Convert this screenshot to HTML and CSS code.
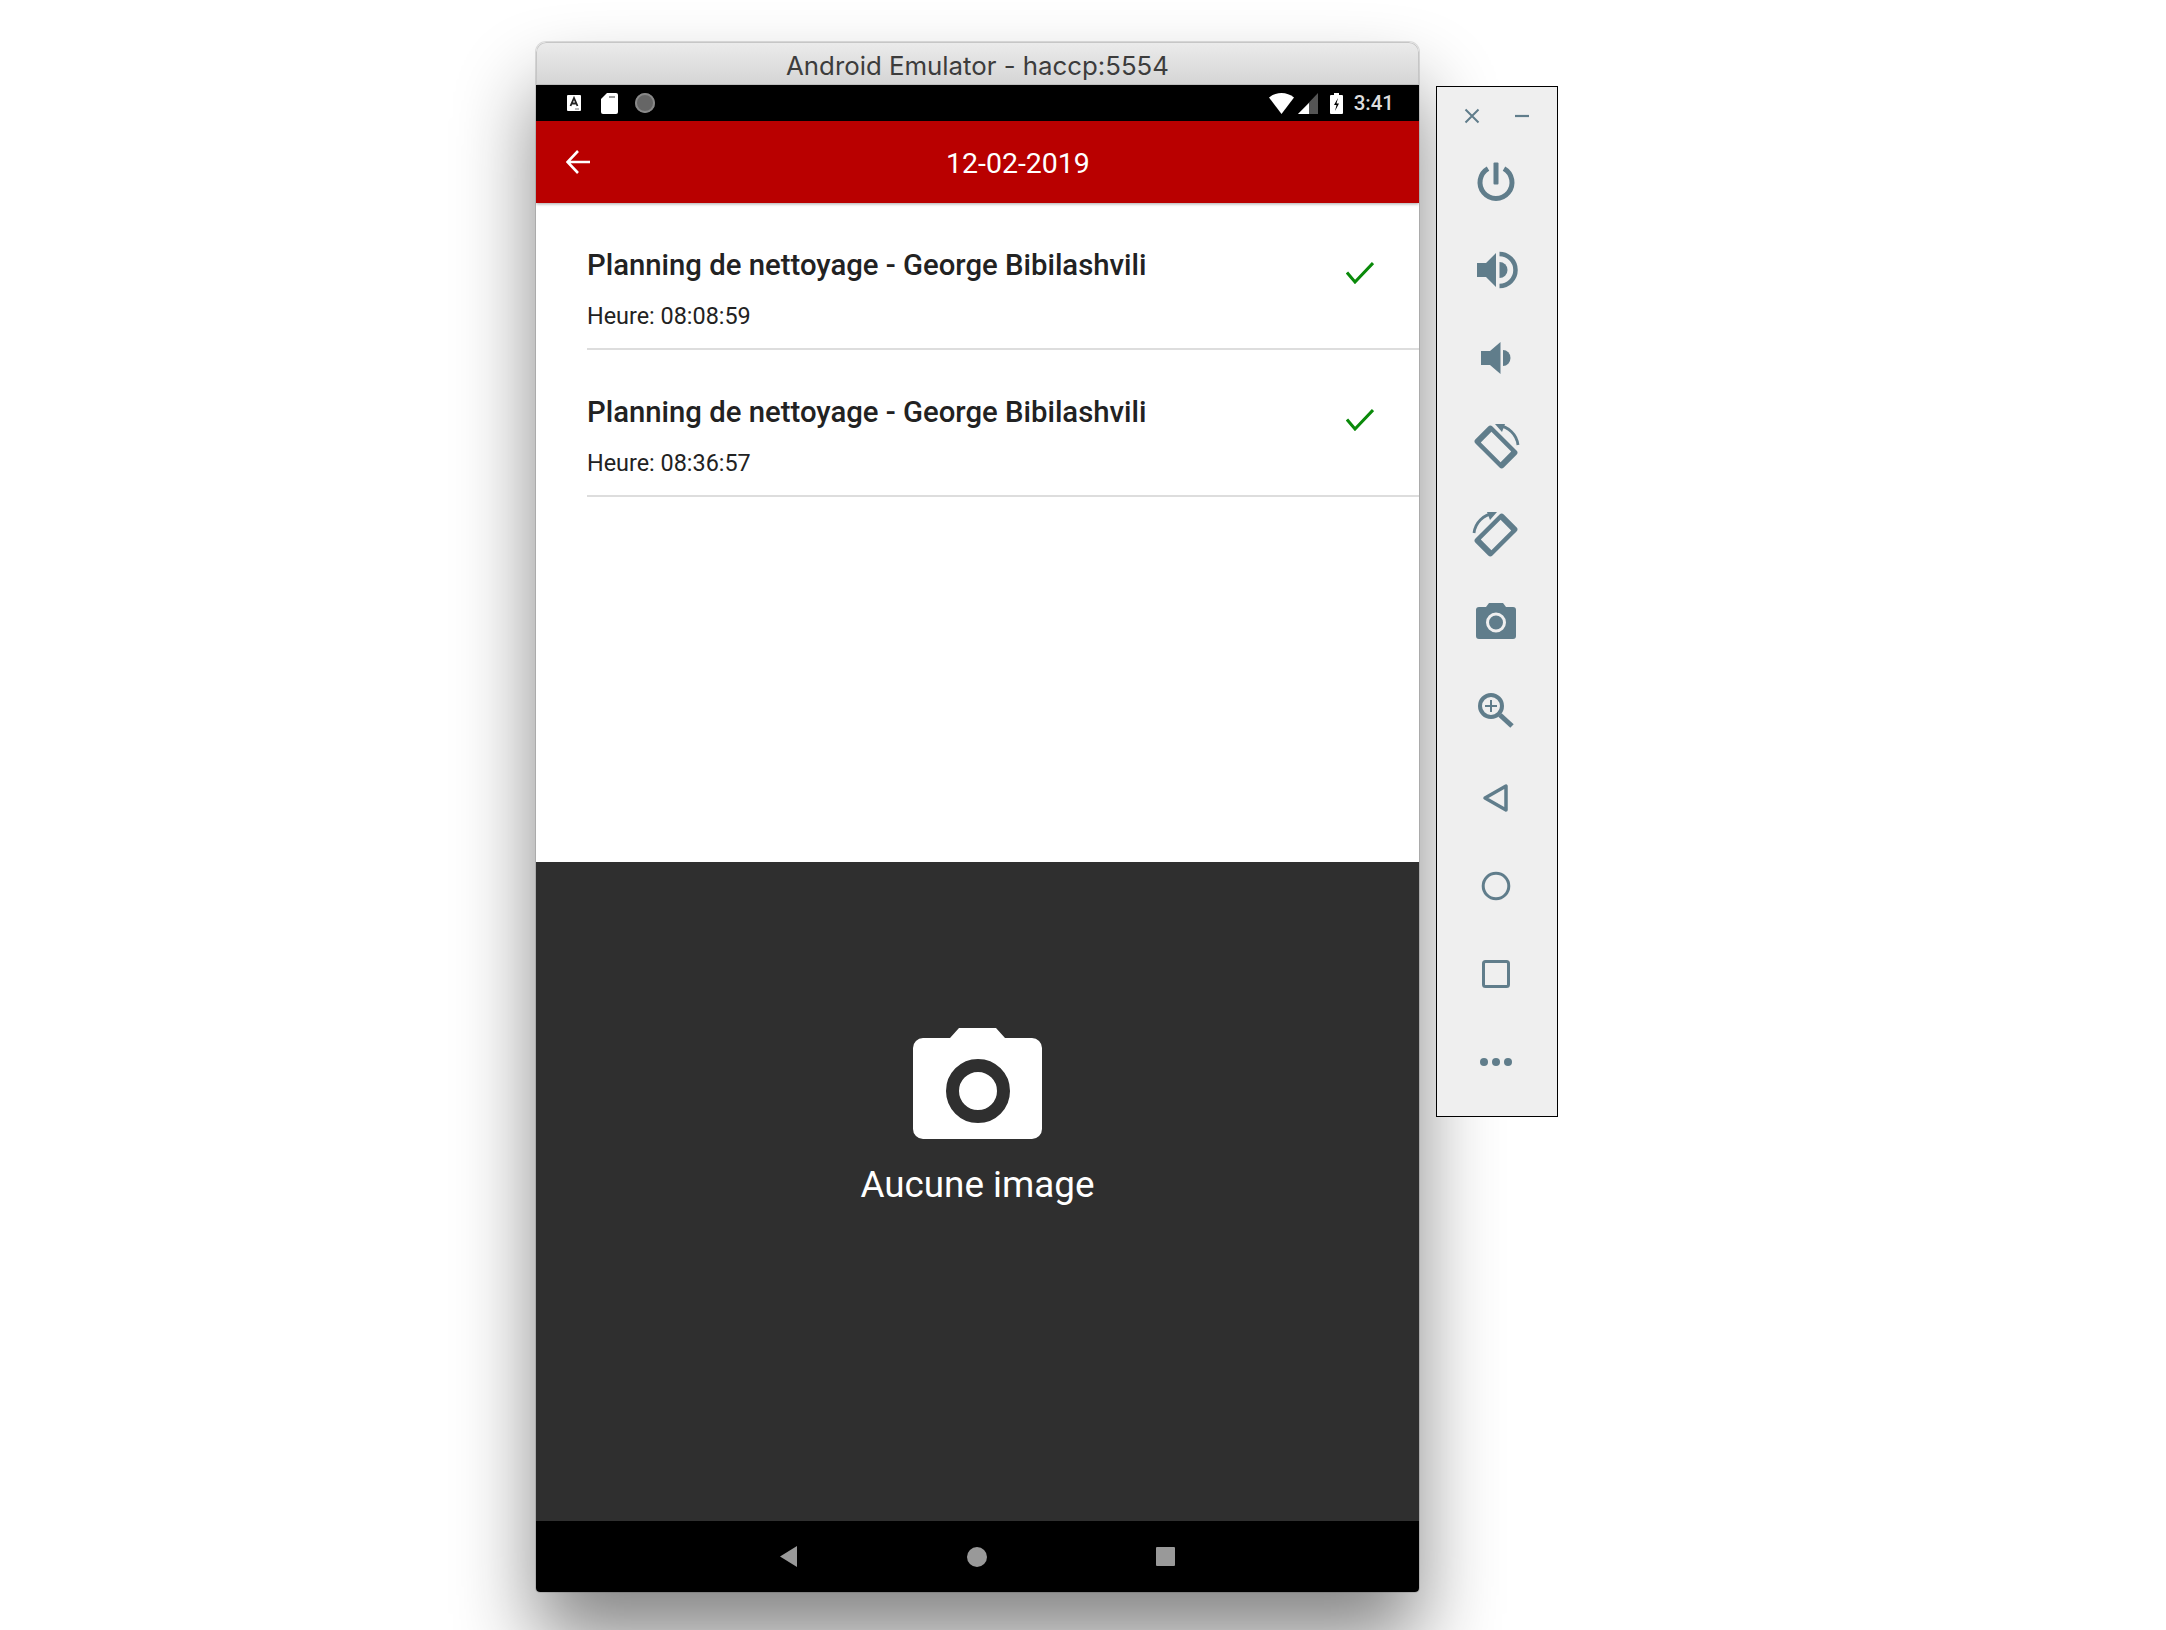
FILE: index.html
```html
<!DOCTYPE html>
<html lang="en">
<head>
    <meta charset="UTF-8">
    <title>Android Emulator - haccp:5554</title>
    <link rel="stylesheet" href="styles.css">
</head>
<body>
    <div class="desktop">
        <div class="emulator">
            <div class="titlebar">Android Emulator - haccp:5554</div>

            <div class="statusbar">
                <div class="status-left">
                    <svg class="notif-a" width="14" height="16" viewBox="0 0 14 16">
                        <rect width="14" height="16" rx="1" fill="#fff"/>
                        <path d="M3.5 11 7 3l3.500 8M5 8.500h4" fill="none" stroke="#222" stroke-width="1.800"/>
                        <path d="M8 14h4" stroke="#777" stroke-width="1"/>
                    </svg>
                    <svg class="notif-sd" width="17" height="21" viewBox="0 0 17 21">
                        <path d="M6 0h9a2 2 0 0 1 2 2v17a2 2 0 0 1-2 2H2a2 2 0 0 1-2-2V6z" fill="#fff"/>
                        <path d="M8 3h6v2H8z" fill="#999"/>
                    </svg>
                    <span class="notif-dot"></span>
                </div>
                <div class="status-right">
                    <svg class="icon-wifi" width="25" height="21" viewBox="0 0 25 21">
                        <path d="M0 4.500C3.500 1.500 8 0 12.500 0S21.500 1.500 25 4.500L12.500 21z" fill="#fff"/>
                    </svg>
                    <svg class="icon-signal" width="20" height="21" viewBox="0 0 20 21">
                        <path d="M20 0v21H0z" fill="#555"/>
                        <path d="M11 10v11H0z" fill="#fff"/>
                    </svg>
                    <svg class="icon-battery" width="13" height="21" viewBox="0 0 13 21">
                        <path d="M4 0h5v2h3a1 1 0 0 1 1 1v17a1 1 0 0 1-1 1H1a1 1 0 0 1-1-1V3a1 1 0 0 1 1-1h3z" fill="#fff"/>
                        <path d="M8 5 4 12h2.500L5 18l4-7.500H6.500z" fill="#000"/>
                    </svg>
                    <span class="clock">3:41</span>
                </div>
            </div>

            <div class="appbar">
                <svg class="back-arrow" width="24" height="24" viewBox="0 0 24 24">
                    <path d="M24 12H2M12 1 1.500 12 12 23" fill="none" stroke="#fff" stroke-width="2.600"/>
                </svg>
                <div class="appbar-title">12-02-2019</div>
            </div>

            <div class="list">
                <div class="list-item">
                    <div class="item-text">
                        <div class="item-title">Planning de nettoyage - George Bibilashvili</div>
                        <div class="item-sub">Heure: 08:08:59</div>
                    </div>
                    <svg class="check" width="28" height="22" viewBox="0 0 28 22">
                        <path d="M1 10.500 9 20 27 1" fill="none" stroke="#0a8a0a" stroke-width="3"/>
                    </svg>
                </div>
                <div class="list-item">
                    <div class="item-text">
                        <div class="item-title">Planning de nettoyage - George Bibilashvili</div>
                        <div class="item-sub">Heure: 08:36:57</div>
                    </div>
                    <svg class="check" width="28" height="22" viewBox="0 0 28 22">
                        <path d="M1 10.500 9 20 27 1" fill="none" stroke="#0a8a0a" stroke-width="3"/>
                    </svg>
                </div>
            </div>

            <div class="photo">
                <svg class="photo-icon" width="129" height="111" viewBox="0 0 129 111">
                    <path d="M10 10h27l9-10h37l9 10h27a10 10 0 0 1 10 10v81a10 10 0 0 1-10 10H10a10 10 0 0 1-10-10V20a10 10 0 0 1 10-10z" fill="#fff"/>
                    <circle cx="65" cy="63" r="25.500" fill="none" stroke="#2f2f2f" stroke-width="13"/>
                </svg>
                <div class="photo-label">Aucune image</div>
            </div>

            <div class="navbar">
                <svg width="17" height="21" viewBox="0 0 17 21"><path d="M17 0v21L0 10.500z" fill="#999"/></svg>
                <span class="nav-home"></span>
                <span class="nav-recent"></span>
            </div>
        </div>

        <div class="toolbar">
            <div class="toolbar-head">
                <svg width="16" height="16" viewBox="0 0 16 16"><path d="M1.500 1.500l13 13M14.500 1.500l-13 13" fill="none" stroke="#607d8b" stroke-width="2"/></svg>
                <svg width="16" height="16" viewBox="0 0 16 16"><path d="M1 8h14" fill="none" stroke="#607d8b" stroke-width="2.200"/></svg>
            </div>

            <div class="tool">
                <svg width="48" height="48" viewBox="0 0 48 48">
                    <path d="M16 10.600A16 16 0 1 0 32 10.600" fill="none" stroke="#607d8b" stroke-width="5"/>
                    <rect x="21.500" y="4.500" width="5" height="22" rx="1" fill="#607d8b"/>
                </svg>
            </div>
            <div class="tool">
                <svg width="48" height="48" viewBox="0 0 48 48">
                    <path d="M5 17h9L24 7v34L14 31H5z" fill="#607d8b"/>
                    <path d="M27.500 16a8 8 0 0 1 0 16z" fill="#607d8b"/>
                    <path d="M27.500 8A16 16 0 0 1 27.500 40" fill="none" stroke="#607d8b" stroke-width="4.500"/>
                </svg>
            </div>
            <div class="tool">
                <svg width="48" height="48" viewBox="0 0 48 48">
                    <path d="M9 17h9L28.500 8v32L18 31H9z" fill="#607d8b"/>
                    <path d="M31 16a7.500 8 0 0 1 0 16z" fill="#607d8b"/>
                </svg>
            </div>
            <div class="tool">
                <svg width="48" height="48" viewBox="0 0 48 48">
                    <g transform="rotate(45 24 25)">
                        <path d="M7 13h34a3 3 0 0 1 3 3v18a3 3 0 0 1-3 3H7a3 3 0 0 1-3-3V16a3 3 0 0 1 3-3zM10 17.500v15h28v-15z" fill="#607d8b" fill-rule="evenodd"/>
                    </g>
                    <path d="M26 3.500A22 22 0 0 1 46 23" fill="none" stroke="#607d8b" stroke-width="2.800"/>
                    <path d="M23 2l10 0-3 8z" fill="#607d8b"/>
                </svg>
            </div>
            <div class="tool">
                <svg width="48" height="48" viewBox="0 0 48 48">
                    <g transform="translate(48 0) scale(-1 1)">
                        <g transform="rotate(45 24 25)">
                            <path d="M7 13h34a3 3 0 0 1 3 3v18a3 3 0 0 1-3 3H7a3 3 0 0 1-3-3V16a3 3 0 0 1 3-3zM10 17.500v15h28v-15z" fill="#607d8b" fill-rule="evenodd"/>
                        </g>
                        <path d="M26 3.500A22 22 0 0 1 46 23" fill="none" stroke="#607d8b" stroke-width="2.800"/>
                        <path d="M23 2l10 0-3 8z" fill="#607d8b"/>
                    </g>
                </svg>
            </div>
            <div class="tool">
                <svg width="48" height="48" viewBox="0 0 48 48">
                    <path d="M7 9h7l3-4h14l3 4h7a3 3 0 0 1 3 3v26a3 3 0 0 1-3 3H7a3 3 0 0 1-3-3V12a3 3 0 0 1 3-3z" fill="#607d8b"/>
                    <circle cx="24" cy="24.500" r="8.500" fill="#607d8b" stroke="#efefef" stroke-width="3"/>
                </svg>
            </div>
            <div class="tool">
                <svg width="48" height="48" viewBox="0 0 48 48">
                    <circle cx="19" cy="20" r="11" fill="none" stroke="#607d8b" stroke-width="4"/>
                    <path d="M28 29l12 11" fill="none" stroke="#607d8b" stroke-width="5"/>
                    <path d="M13 20h12M19 14v12" fill="none" stroke="#607d8b" stroke-width="2"/>
                </svg>
            </div>
            <div class="tool">
                <svg width="48" height="48" viewBox="0 0 48 48">
                    <path d="M13 24 34 12v24z" fill="none" stroke="#607d8b" stroke-width="3.500" stroke-linejoin="round"/>
                </svg>
            </div>
            <div class="tool">
                <svg width="48" height="48" viewBox="0 0 48 48">
                    <circle cx="24" cy="24" r="12.800" fill="none" stroke="#607d8b" stroke-width="3"/>
                </svg>
            </div>
            <div class="tool">
                <svg width="48" height="48" viewBox="0 0 48 48">
                    <rect x="11.500" y="11.500" width="25" height="25" rx="2" fill="none" stroke="#607d8b" stroke-width="3"/>
                </svg>
            </div>
            <div class="tool">
                <svg width="48" height="48" viewBox="0 0 48 48">
                    <circle cx="12" cy="24" r="4" fill="#607d8b"/>
                    <circle cx="24" cy="24" r="4" fill="#607d8b"/>
                    <circle cx="36" cy="24" r="4" fill="#607d8b"/>
                </svg>
            </div>
        </div>
    </div>
</body>
</html>
```

FILE: styles.css
```css
html, body {
    margin: 0;
    height: 100%;
    overflow: hidden;
    background-color: #fff;
}

body {
    font-family: Roboto, "Liberation Sans", sans-serif;
}

.desktop {
    display: flex;
    align-items: flex-start;
    padding: 42px 0 0 536px;
}

/* emulator window */
.emulator {
    width: 883px;
    border-radius: 10px 10px 4px 4px;
    box-shadow: 0 48px 80px rgba(0, 0, 0, 0.48), 0 0 0 1px rgba(0, 0, 0, 0.12);
    overflow: hidden;
    flex-shrink: 0;
}

.titlebar {
    height: 43px;
    box-sizing: border-box;
    border: 1px solid #c6c6c6;
    border-bottom-color: #bdbdbd;
    border-radius: 10px 10px 0 0;
    background: linear-gradient(#ebebeb, #d5d5d5);
    color: #3c3c3c;
    font-family: Inter, sans-serif;
    font-size: 25.800px;
    line-height: 45px;
    text-align: center;
}

.statusbar {
    height: 36px;
    background-color: #000;
    display: flex;
    align-items: center;
    justify-content: space-between;
    padding: 0 25px 0 31px;
}

.status-left {
    display: flex;
    align-items: center;
}

.notif-sd {
    margin-left: 20px;
}

.notif-dot {
    width: 20px;
    height: 20px;
    margin-left: 17px;
    border-radius: 50%;
    background-color: #666;
    box-shadow: inset 0 0 0 2px #888;
}

.status-right {
    display: flex;
    align-items: center;
}

.icon-signal {
    margin-left: 4px;
}

.icon-battery {
    margin-left: 12px;
}

.clock {
    margin-left: 11px;
    color: #ddd;
    font-size: 20.500px;
    font-weight: 500;
}

.appbar {
    height: 82px;
    box-sizing: border-box;
    background-color: #b90000;
    box-shadow: 0 1px 3px rgba(0, 0, 0, 0.35);
    display: flex;
    align-items: center;
    padding: 0 0 0 30px;
    position: relative;
}

.back-arrow {
    margin-top: -1px;
}

.appbar-title {
    margin: 3px 0 0 356px;
    color: #fff;
    font-size: 28.500px;
}

.list {
    height: 659px;
    background-color: #fff;
}

.list-item {
    height: 147px;
    box-sizing: border-box;
    margin-left: 51px;
    border-bottom: 2px solid #ddd;
    display: flex;
    justify-content: space-between;
    align-items: flex-start;
    padding: 44px 45px 0 0;
}

.item-title {
    color: #222;
    font-size: 29.300px;
    font-weight: 500;
    line-height: 36px;
}

.item-sub {
    margin-top: 18px;
    color: #222;
    font-size: 23.400px;
    line-height: 30px;
}

.check {
    margin-top: 15px;
}

.photo {
    height: 659px;
    box-sizing: border-box;
    background-color: #2f2f2f;
    padding-top: 166px;
    display: flex;
    flex-direction: column;
    align-items: center;
}

.photo-icon {
    display: block;
}

.photo-label {
    margin-top: 24px;
    color: #fff;
    font-size: 36.800px;
    line-height: 44px;
}

.navbar {
    height: 71px;
    background-color: #000;
    display: flex;
    align-items: center;
    justify-content: center;
    gap: 170px;
}

.nav-home {
    width: 20px;
    height: 20px;
    border-radius: 50%;
    background-color: #999;
}

.nav-recent {
    width: 19px;
    height: 19px;
    margin-left: -1px;
    border-radius: 1px;
    background-color: #999;
}

/* side toolbar */
.toolbar {
    width: 122px;
    height: 1031px;
    box-sizing: border-box;
    margin: 44px 0 0 17px;
    border: 1px solid #000;
    background-color: #efefef;
    position: relative;
    flex-shrink: 0;
}

.toolbar-head {
    height: 51px;
    padding: 6px 27px 0 27px;
    box-sizing: border-box;
    display: flex;
    align-items: center;
    justify-content: space-between;
}

.tool {
    height: 88px;
    padding-right: 2px;
    display: flex;
    align-items: center;
    justify-content: center;
}
```
